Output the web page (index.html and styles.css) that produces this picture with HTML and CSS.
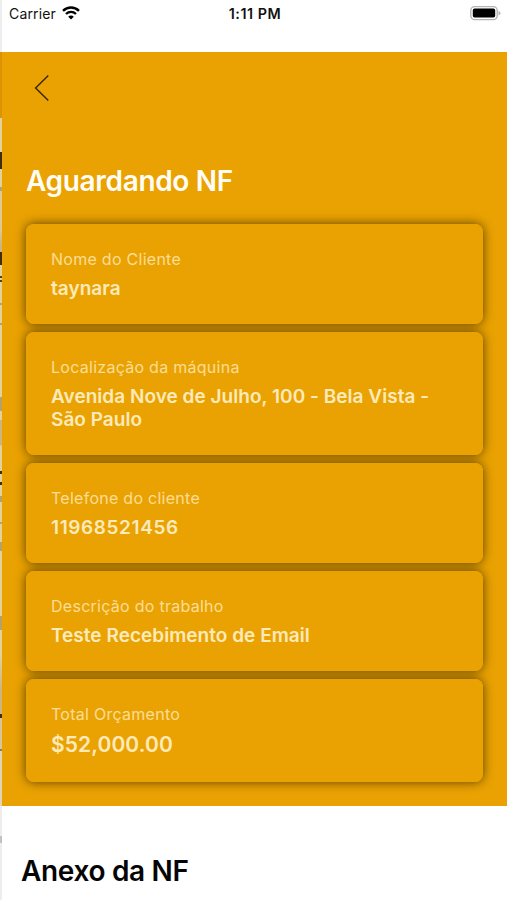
FILE: index.html
```
<!DOCTYPE html>
<html lang="pt-BR">
<head>
    <meta charset="UTF-8">
    <meta name="viewport" content="width=device-width, initial-scale=1.0">
    <title>Aguardando NF</title>
    <link rel="stylesheet" href="styles.css">
</head>
<body>

    <!-- Edge of the previous screen -->
    <div class="previous-screen"></div>

    <div class="screen">
        <div class="status-bar">
            <div class="carrier">
                <span>Carrier</span>
                <svg class="wifi" width="18" height="14" viewBox="0 0 18 14">
                    <path d="M1 4.8C5.6 .5 12.4 .5 17 4.8" fill="none" stroke="#000" stroke-width="2.5"/>
                    <path d="M4 8C6.9 5.2 11.1 5.2 14 8" fill="none" stroke="#000" stroke-width="2.3"/>
                    <path d="M9 13.6L6.2 10.7C7.8 9.2 10.2 9.2 11.8 10.7Z" fill="#000"/>
                </svg>
            </div>
            <span class="time">1:11 PM</span>
            <svg class="battery" width="31" height="15" viewBox="0 0 31 15">
                <rect x=".8" y=".6" width="26.4" height="13" rx="3.8" fill="#fff" stroke="#b5b5b5" stroke-width="1.4"/>
                <rect x="2.8" y="2.6" width="22.4" height="9" rx="1.8" fill="#000"/>
                <path d="M28.5 5Q30.5 5.6 30.5 7.2T28.5 9.4Z" fill="#b5b5b5"/>
            </svg>
        </div>

        <div class="details">
            <a class="back" href="#">
                <svg width="16" height="28" viewBox="0 0 16 28">
                    <path d="M14.3 1.5L1.6 14L14.3 26.5" fill="none" stroke="#3c2900" stroke-width="1.5"/>
                </svg>
            </a>
            <h1>Aguardando NF</h1>
            <div class="cards">
                <div class="card">
                    <p class="label">Nome do Cliente</p>
                    <p class="value">taynara</p>
                </div>
                <div class="card address">
                    <p class="label">Localização da máquina</p>
                    <p class="value">Avenida Nove de Julho, 100 - Bela Vista - São Paulo</p>
                </div>
                <div class="card">
                    <p class="label">Telefone do cliente</p>
                    <p class="value phone">11968521456</p>
                </div>
                <div class="card">
                    <p class="label">Descrição do trabalho</p>
                    <p class="value">Teste Recebimento de Email</p>
                </div>
                <div class="card total">
                    <p class="label">Total Orçamento</p>
                    <p class="value price">$52,000.00</p>
                </div>
            </div>
        </div>

        <h2>Anexo da NF</h2>
    </div>

</body>
</html>
```
FILE: styles.css
```
* {
    box-sizing: border-box;
}

body {
    display: flex;
    width: 507px;
    height: 900px;
    margin: 0;
    overflow: hidden;
    background-color: #fff;
    font-family: Inter, "Liberation Sans", sans-serif;
}

h1, h2, p {
    margin: 0;
}

.previous-screen {
    width: 2px;
    flex-shrink: 0;
    background: linear-gradient(
        #eee 0 52px, #dc9303 52px 118px, #e2d29a 118px 152px,
        #3f2c08 152px 169px, #e2d29a 169px 187px, #b7a06c 187px 191px,
        #dfc98f 191px 230px, #cdb47c 245px 252px, #3f2c08 252px 265px,
        #e2d29a 265px 276px, #55420f 276px 278px, #e2d29a 278px 280px,
        #55420f 280px 282px, #e2d29a 282px 303px, #b7a06c 303px 305px,
        #e2d29a 305px 323px, #b7a06c 323px 325px, #e2d29a 325px 397px,
        #b7a06c 397px 411px, #e2d29a 411px 420px, #cdb47c 420px 445px,
        #e2d29a 446px 471px, #3f2c08 471px 474px, #e2d29a 474px 482px,
        #3f2c08 482px 485px, #e2d29a 485px 496px, #b7a06c 496px 502px,
        #e2d29a 502px 522px, #b7a06c 522px 524px, #e2d29a 524px 542px,
        #b7a06c 542px 551px, #e2d29a 551px 616px, #b7a06c 616px 630px,
        #e2d29a 630px 655px, #cdb47c 690px 714px, #3f2c08 714px 718px,
        #dcc49a 718px 749px, #8f7a5a 749px 751px, #e0d4b4 751px 806px,
        #ededed 806px 836px, #c2c2c2 836px 843px, #ededed 843px);
}

.screen {
    flex: 1;
}

/* Status bar */
.status-bar {
    display: grid;
    grid-template-columns: 1fr auto 1fr;
    height: 52px;
    padding: 6px 6px 0 7px;
    line-height: 16px;
    color: #111;
}

.carrier {
    display: flex;
    gap: 6px;
    font-size: 14px;
    letter-spacing: 0.15px;
}

.time {
    font-size: 14.3px;
    font-weight: 600;
    letter-spacing: 0.55px;
}

.battery {
    justify-self: end;
}

/* Yellow section */
.details {
    height: 754px;
    padding: 22px 24px 0 24px;
    background-color: #eaa202;
}

.back {
    display: block;
    width: 16px;
    height: 28px;
    margin-left: 8px;
}

h1 {
    margin-top: 61px;
    font-size: 28px;
    font-weight: 600;
    line-height: 36px;
    letter-spacing: -0.33px;
    color: #fffdf5;
}

.cards {
    display: flex;
    flex-direction: column;
    gap: 8px;
    margin-top: 25px;
    isolation: isolate;
}

.card {
    position: relative;
    height: 100px;
    padding: 25px;
    border-radius: 8px;
    background-color: #eaa202;
}

/* shadows stay under every card */
.card::before {
    content: "";
    position: absolute;
    inset: 0;
    z-index: -1;
    border-radius: 8px;
    box-shadow: 0 0 11px rgba(0, 0, 0, 0.62);
}

.card.address {
    height: 123px;
}

.card.total {
    height: 103px;
}

.label {
    font-size: 16px;
    line-height: 20px;
    letter-spacing: 0.27px;
    color: #fbdd96;
}

.value {
    margin-top: 8px;
    font-size: 19px;
    font-weight: 600;
    line-height: 23px;
    letter-spacing: 0.03px;
    color: #fdeabb;
}

.phone {
    letter-spacing: 0.6px;
}

.price {
    font-size: 21px;
    line-height: 26px;
    letter-spacing: 0.1px;
}

/* Attachment section */
h2 {
    margin: 47px 0 0 19px;
    font-size: 28px;
    font-weight: 600;
    line-height: 36px;
    letter-spacing: -0.33px;
    color: #050505;
}
```
